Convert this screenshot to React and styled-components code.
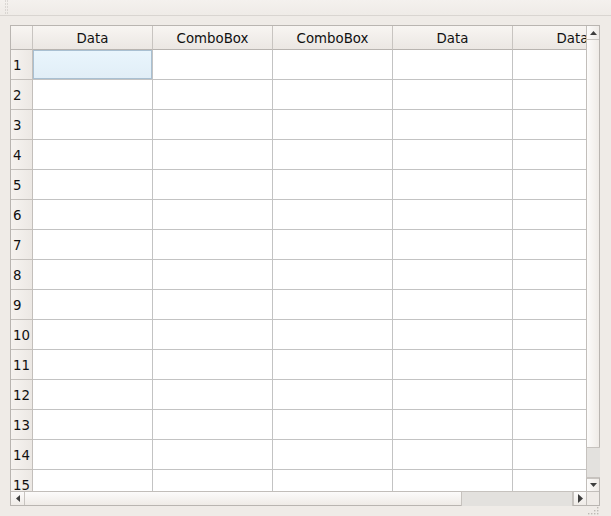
import React from "react";
import styled, { createGlobalStyle } from "styled-components";

const GlobalStyle = createGlobalStyle`
  html, body {
    margin: 0;
    padding: 0;
    background: #efebe7;
  }
  body {
    font-family: "DejaVu Sans", "Liberation Sans", sans-serif;
    font-size: 10pt;
    color: #101010;
  }
`;

const columns = ["Data", "ComboBox", "ComboBox", "Data", "Data"];
const rows = Array.from({ length: 15 }, (_, i) => i + 1);

const Window = styled.div`
  width: 611px;
  height: 516px;
  display: flex;
  flex-direction: column;
  overflow: hidden;
`;

const ToolBar = styled.div`
  height: 15px;
  flex: none;
  display: flex;
  padding-left: 5px;
  background: linear-gradient(#f4f1ee, #efebe7);
  border-bottom: 1px solid #d9d5d1;
`;

const Grip = styled.svg`
  width: 3px;
  height: 15px;
`;

const Body = styled.div`
  flex: 1;
  display: flex;
  flex-direction: column;
  padding: 9px 11px 0 10px;
`;

const Frame = styled.div`
  width: 590px;
  height: 481px;
  box-sizing: border-box;
  border: 1px solid #b9b5b1;
  display: grid;
  grid-template-columns: 1fr 13px;
  grid-template-rows: 1fr 14px;
  background: #fff;
`;

const Viewport = styled.div`
  overflow: hidden;
  position: relative;
`;

const Table = styled.div`
  display: grid;
  grid-template-columns: 22px repeat(${(p) => p.$cols}, 120px);
  grid-auto-rows: 30px;
  grid-template-rows: 24px;
  width: max-content;
`;

const Corner = styled.div`
  box-sizing: border-box;
  background: linear-gradient(#f8f5f2, #ebe7e3);
  border-right: 1px solid #c8c4c0;
  border-bottom: 1px solid #b8b4b0;
`;

const HeaderCell = styled.div`
  box-sizing: border-box;
  background: linear-gradient(#f8f5f2, #ebe7e3);
  border-right: 1px solid #c8c4c0;
  border-bottom: 1px solid #b8b4b0;
  display: flex;
  align-items: center;
  justify-content: center;
  white-space: nowrap;
  padding-top: 1px;
`;

const RowHead = styled.div`
  box-sizing: border-box;
  background: linear-gradient(90deg, #f6f3f0, #ece8e4);
  border-right: 1px solid #c3bfbb;
  border-bottom: 1px solid #c3bfbb;
  display: flex;
  align-items: center;
  padding-left: 2px;
  padding-top: 1px;
`;

const Cell = styled.div`
  box-sizing: border-box;
  border-right: 1px solid #c3c3c3;
  border-bottom: 1px solid #c3c3c3;
  background: #fff;
  position: relative;
  ${(p) =>
    p.$selected &&
    `
    &::after {
      content: "";
      position: absolute;
      inset: 0;
      border: 1px solid #a9c0d2;
      background: linear-gradient(#e9f5fc, #e1eef7);
    }
  `}
`;

const VBar = styled.div`
  box-sizing: border-box;
  border-left: 1px solid #c2beba;
  display: grid;
  grid-template-rows: 14px 1fr 13px;
  background: linear-gradient(90deg, #fcfbfa, #efebe7);
`;

const HBar = styled.div`
  box-sizing: border-box;
  border-top: 1px solid #c2beba;
  display: grid;
  grid-template-columns: 14px 1fr 13px;
  background: linear-gradient(#fcfbfa, #efebe7);
`;

const ArrowButton = styled.div`
  box-sizing: border-box;
  display: flex;
  align-items: center;
  justify-content: center;
  ${(p) => p.$edge}: 1px solid #c8c4c0;
`;

const Track = styled.div`
  display: flex;
  flex-direction: ${(p) => (p.$vertical ? "column" : "row")};
  justify-content: flex-end;
`;

const Thumb = styled.div`
  box-sizing: border-box;
  background: #e3e1de;
  border: 1px solid #c6c2be;
  ${(p) =>
    p.$vertical
      ? "height: 31px; margin: 0 -1px 0 -1px; border-right: none;"
      : "width: 112px; margin: -1px 0 -1px 0; border-bottom: none;"}
`;

const CornerBox = styled.div`
  box-sizing: border-box;
  border-top: 1px solid #c2beba;
  border-left: 1px solid #c2beba;
  background: #efebe7;
`;

const Footer = styled.div`
  flex: 1;
  display: flex;
  justify-content: flex-end;
  align-items: flex-end;
  padding-right: 1px;
`;

const Arrow = ({ dir }) => {
  const shapes = {
    up: "0,4 7,4 3.5,0",
    down: "0,0 7,0 3.5,4",
    left: "4,0 4,7 0,3.5",
    right: "0,0 0,9 5,4.5",
  };
  const size = {
    up: [7, 4],
    down: [7, 4],
    left: [4, 7],
    right: [5, 9],
  }[dir];
  return (
    <svg width={size[0]} height={size[1]} viewBox={`0 0 ${size[0]} ${size[1]}`}>
      <polygon points={shapes[dir]} fill="#3e3e3e" />
    </svg>
  );
};

const SizeGrip = () => (
  <svg width="12" height="10" viewBox="0 0 12 10">
    {[
      [10, 1], [10, 4], [7, 4], [10, 7], [7, 7], [4, 7], [1, 7],
    ].map(([x, y], i) => (
      <rect key={i} x={x} y={y} width="1.4" height="1.4" fill="#bdb9b5" />
    ))}
  </svg>
);

export default function App() {
  return (
    <>
      <GlobalStyle />
      <Window>
        <ToolBar>
          <Grip viewBox="0 0 3 15">
            {[0, 3, 6, 9, 12].map((y) => (
              <g key={y}>
                <rect x="0" y={y + 0.5} width="1" height="1" fill="#c4c0bc" />
                <rect x="2" y={y + 0.5} width="1" height="1" fill="#c4c0bc" />
              </g>
            ))}
          </Grip>
        </ToolBar>
        <Body>
          <Frame>
            <Viewport>
              <Table $cols={columns.length}>
                <Corner />
                {columns.map((c, i) => (
                  <HeaderCell key={"h" + i}>{c}</HeaderCell>
                ))}
                {rows.map((r) => (
                  <React.Fragment key={r}>
                    <RowHead>{r}</RowHead>
                    {columns.map((_, i) => (
                      <Cell key={i} $selected={r === 1 && i === 0} />
                    ))}
                  </React.Fragment>
                ))}
              </Table>
            </Viewport>
            <VBar>
              <ArrowButton $edge="border-bottom">
                <Arrow dir="up" />
              </ArrowButton>
              <Track $vertical>
                <Thumb $vertical />
              </Track>
              <ArrowButton $edge="border-top">
                <Arrow dir="down" />
              </ArrowButton>
            </VBar>
            <HBar>
              <ArrowButton $edge="border-right">
                <Arrow dir="left" />
              </ArrowButton>
              <Track>
                <Thumb />
              </Track>
              <ArrowButton $edge="border-left">
                <Arrow dir="right" />
              </ArrowButton>
            </HBar>
            <CornerBox />
          </Frame>
          <Footer>
            <SizeGrip />
          </Footer>
        </Body>
      </Window>
    </>
  );
}
